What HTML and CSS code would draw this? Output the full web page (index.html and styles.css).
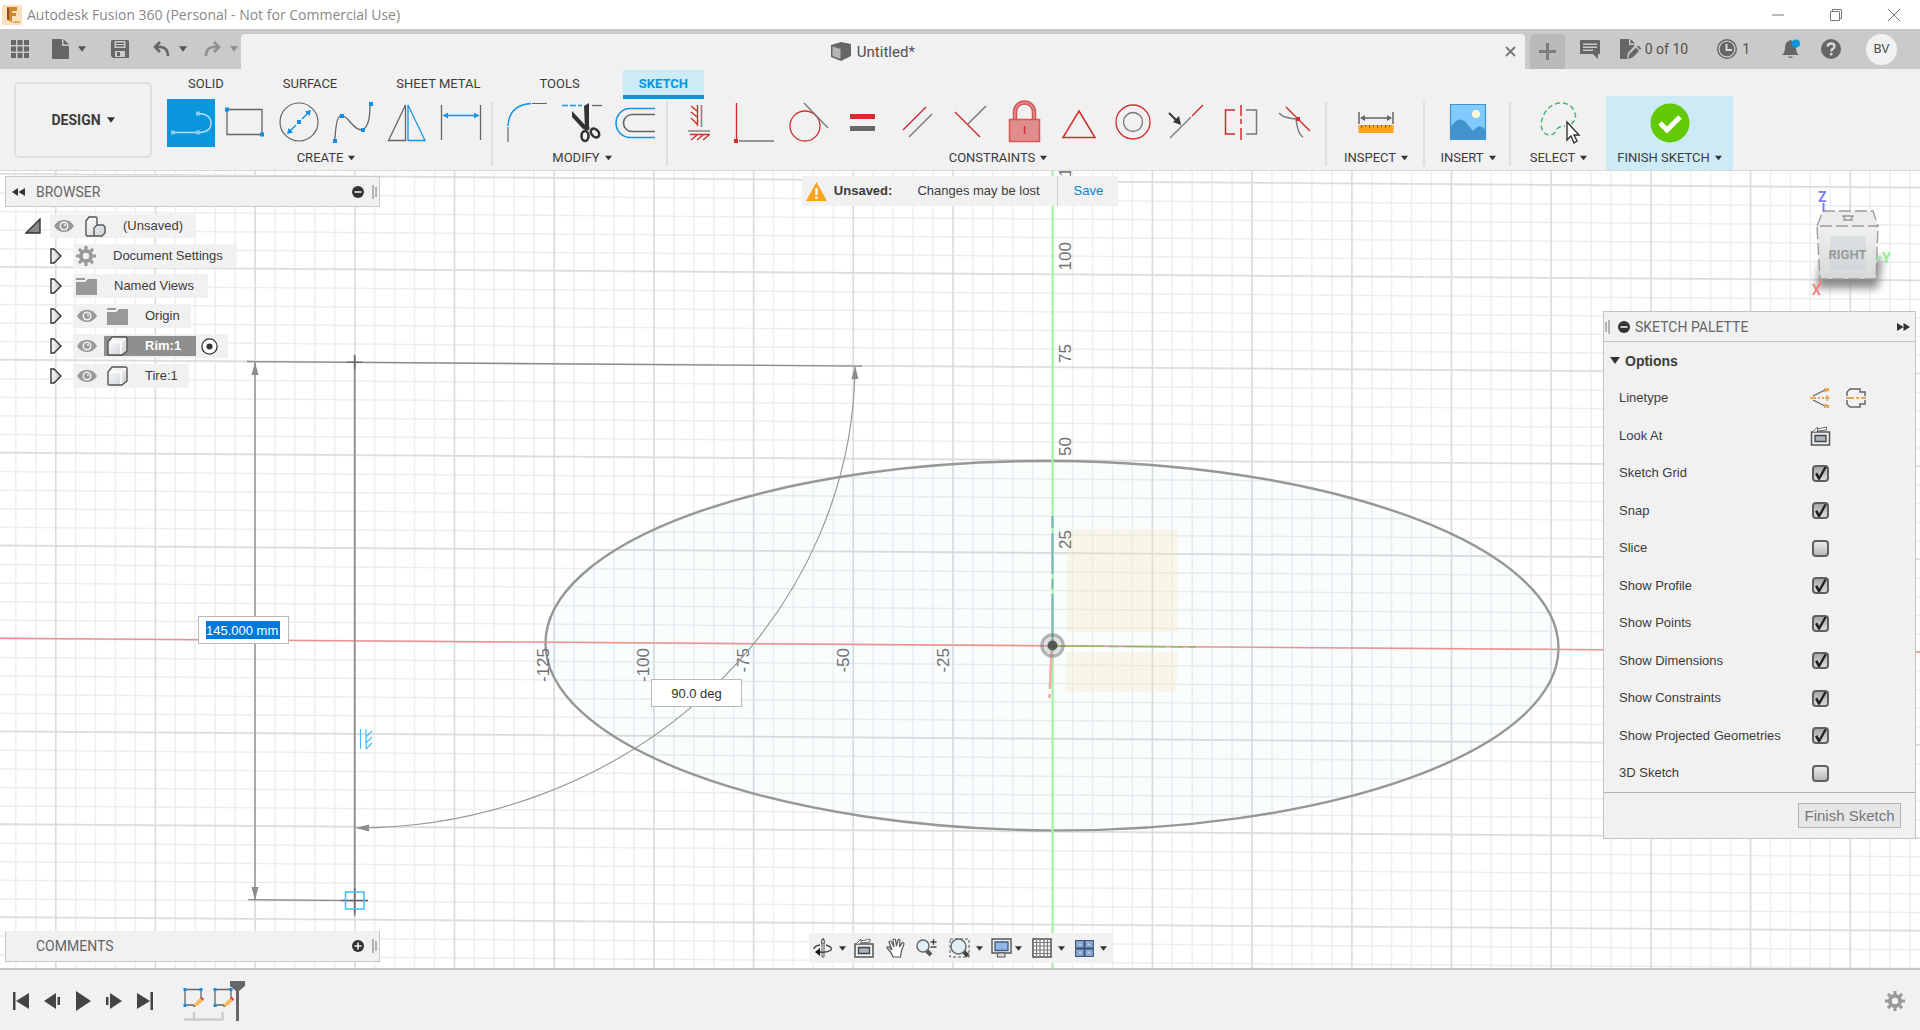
FILE: index.html
```html
<!DOCTYPE html>
<html lang="en">
<head>
<meta charset="utf-8">
<title>Autodesk Fusion 360</title>
<link rel="stylesheet" href="styles.css">
</head>
<body>
<svg class="defs" aria-hidden="true">
  <defs>
    <linearGradient id="face" x1="0" y1="0" x2="1" y2="1"><stop offset="0" stop-color="#fff"/><stop offset="1" stop-color="#ccd0d4"/></linearGradient>
    <linearGradient id="tri" x1="0" y1="0" x2="1" y2="0"><stop offset="0" stop-color="#fff"/><stop offset="1" stop-color="#bbb"/></linearGradient>
    <symbol id="caret" viewBox="0 0 9 6"><path d="M0 0H9L4.500 6Z" fill="currentColor"/></symbol>
    <symbol id="eye" viewBox="0 0 20 14"><path d="M0 7C5-1.500 15-1.500 20 7C15 15 5 15 0 7Z" fill="#999"/><circle cx="10" cy="7" r="4.500" fill="#f1f1f1"/><circle cx="10" cy="7" r="3" fill="#999"/><circle cx="11" cy="6" r="1" fill="#f1f1f1"/></symbol>
    <symbol id="folder" viewBox="0 0 21 17"><path d="M0 0H9V2H0ZM0 4H9L12 1H21V17H0Z" fill="#999"/></symbol>
    <symbol id="expand" viewBox="0 0 12 16"><path d="M1 1L4 1L11 8L4 15L1 15Z" fill="url(#tri)" stroke="#333" stroke-width="1.400"/></symbol>
    <symbol id="body" viewBox="0 0 21 20"><path d="M1 6L5 1H18L20 3V15L15 19H1Z" fill="url(#face)"/><path d="M1 6H14L19 1.500M14 6V18" fill="none" stroke="#fff" stroke-width="1.500"/><path d="M1 6L5 1H18Q20 1 20 3V15L15 19H2Q1 19 1 18Z" fill="none" stroke="#555" stroke-width="1.400"/></symbol>
    <symbol id="lookat" viewBox="0 0 20 20"><path d="M1 6H19V19H1Z" fill="#eee" stroke="#555" stroke-width="1.500"/><path d="M4.500 9.500H15.500V15.500H4.500Z" fill="#aab2c0" stroke="#444" stroke-width="1.300"/><path d="M2 6L7 1V3L16 1V4L7 5M7 3V6" fill="#fff" stroke="#666" stroke-width="1"/></symbol>
    <symbol id="gear" viewBox="0 0 20 20"><g fill="currentColor"><path d="M8.500 0H11.500V20H8.500Z"/><path d="M8.500 0H11.500V20H8.500Z" transform="rotate(45 10 10)"/><path d="M8.500 0H11.500V20H8.500Z" transform="rotate(90 10 10)"/><path d="M8.500 0H11.500V20H8.500Z" transform="rotate(135 10 10)"/><circle cx="10" cy="10" r="7"/></g><circle cx="10" cy="10" r="3.200" fill="#f1f1f1"/></symbol>
    <symbol id="feature" viewBox="0 0 21 22"><path d="M2 2.500H18M2 2V18M18 2V11M2 18H11" fill="none" stroke="#666" stroke-width="1.300"/><path d="M0.500 1H3.500V4H0.500ZM16.500 1H19.500V4H16.500ZM0.500 17H3.500V20H0.500Z" fill="#0d8fe6"/><path d="M10 20L12 16L17 11L20 14L15 18.500Z" fill="#f7bc55"/><path d="M17 11L19 10L21 12L20 14Z" fill="#d9394b"/><path d="M10 20L11 18L13 19.500Z" fill="#666"/></symbol>
  </defs>
</svg>

<div class="app">
  <header class="titlebar">
    <svg class="logo" width="20" height="20" viewBox="0 0 20 20"><rect width="20" height="20" rx="1" fill="#fae0bd"/><path d="M5 2H15V6H10V8H14V11H10V17L5 15Z" fill="#cf8430"/><path d="M5 2L7 4V15L5 14Z" fill="#8d5218"/><path d="M12 16H18V18H10Z" fill="#e8ae68"/></svg>
    <span class="titlebar-text">Autodesk Fusion 360 (Personal - Not for Commercial Use)</span>
    <div class="window-buttons">
      <button aria-label="Minimize"><svg width="12" height="12" viewBox="0 0 12 12"><path d="M0 6H12" stroke="#777"/></svg></button>
      <button aria-label="Restore"><svg width="12" height="12" viewBox="0 0 12 12"><path d="M0.500 2.500H9.500V11.500H0.500ZM2.500 2.500V0.500H11.500V9.500H9.500" fill="none" stroke="#777"/></svg></button>
      <button aria-label="Close"><svg width="12" height="12" viewBox="0 0 12 12"><path d="M0 0L12 12M12 0L0 12" stroke="#777"/></svg></button>
    </div>
  </header>

  <div class="tabbar">
    <div class="quick">
      <button aria-label="Data panel"><svg width="18" height="18" viewBox="0 0 18 18"><path d="M0 0H5V5H0ZM6.500 0H11.500V5H6.500ZM13 0H18V5H13ZM0 6.500H5V11.500H0ZM6.500 6.500H11.500V11.500H6.500ZM13 6.500H18V11.500H13ZM0 13H5V18H0ZM6.500 13H11.500V18H6.500ZM13 13H18V18H13Z" fill="#666"/></svg></button>
      <button class="q-file" aria-label="File"><svg width="17" height="20" viewBox="0 0 17 20"><path d="M1 0H10V7H17V19Q17 20 16 20H1Q0 20 0 19V1Q0 0 1 0ZM11.500 0L17 5.500H11.500Z" fill="#666"/></svg><svg class="c" width="8" height="6"><use href="#caret"/></svg></button>
      <button class="q-save" aria-label="Save"><svg width="18" height="18" viewBox="0 0 18 18"><path fill-rule="evenodd" d="M1 0H17L18 1V18H2L0 16V1ZM3.500 1V8H14.500V1ZM4 11V17H14V11ZM6 12H9V16H6ZM5 2.500H13V4H5ZM5 5H13V6.500H5Z" fill="#666"/></svg></button>
      <button class="q-undo" aria-label="Undo"><svg width="17" height="16" viewBox="0 0 17 16"><path d="M7 1L2 6L7 11M2 6H8Q15 7 15 15" fill="none" stroke="#666" stroke-width="2.600"/></svg><svg class="c" width="8" height="6"><use href="#caret"/></svg></button>
      <button class="q-redo" aria-label="Redo"><svg width="17" height="16" viewBox="0 0 17 16"><path d="M10 1L15 6L10 11M15 6H9Q2 7 2 15" fill="none" stroke="#8e8e8e" stroke-width="2.600"/></svg><svg class="c" width="8" height="6"><use href="#caret"/></svg></button>
    </div>
    <div class="doc-tab">
      <div class="doc-name"><svg width="21" height="20" viewBox="0 0 21 20"><path d="M0 3L10 0L20 2V14L10 19L0 15Z" fill="#666"/><path d="M1.500 4.500L9.500 7V17L1.500 14Z" fill="#b5b5b5"/></svg><span>Untitled*</span></div>
      <button class="tab-close" aria-label="Close tab"><svg width="11" height="11" viewBox="0 0 11 11"><path d="M1 1L10 10M10 1L1 10" stroke="#777" stroke-width="1.800"/></svg></button>
    </div>
    <button class="new-tab" aria-label="New tab"><svg width="17" height="17" viewBox="0 0 17 17"><path d="M8.500 0V17M0 8.500H17" stroke="#7c7c7c" stroke-width="3"/></svg></button>
    <div class="account">
      <button aria-label="Comments"><svg width="20" height="19" viewBox="0 0 20 19"><path fill-rule="evenodd" d="M0 1Q0 0 1 0H19Q20 0 20 1V14H18V19L13 14H0ZM3 3.500V5H17V3.500ZM3 6.500V8H17V6.500ZM3 9.500V11H13V9.500Z" fill="#666"/></svg></button>
      <button class="a-docs"><svg width="21" height="20" viewBox="0 0 21 20"><path d="M0 0H9V6H15L8 14L7 20H0ZM10.500 0L15 4.500H10.500Z" fill="#666"/><path d="M8 20L9.500 15L16 8.500L19 12L12.500 18.500ZM17 7.500L18.500 6.500L21 9.500L20 11Z" fill="#666"/></svg><span>0 of 10</span></button>
      <button class="a-jobs"><svg width="20" height="20" viewBox="0 0 20 20"><circle cx="10" cy="10" r="9.300" fill="#ccc" stroke="#666" stroke-width="1.400"/><circle cx="10" cy="10" r="7.300" fill="#666"/><path d="M9.500 5V11H15" fill="none" stroke="#d8d8d8" stroke-width="2"/></svg><span>1</span></button>
      <button class="a-bell" aria-label="Notifications"><svg width="19" height="20" viewBox="0 0 19 20"><path d="M0 16Q3 14 3 9Q3 3 7 2Q8.500 0 10 2Q14 3 14 9Q14 14 17 16ZM6 17.500H11Q8.500 20.500 6 17.500Z" fill="#666"/><circle cx="14" cy="4.500" r="4" fill="#0a96dc"/></svg></button>
      <button class="a-help" aria-label="Help"><svg width="20" height="20" viewBox="0 0 20 20"><circle cx="10" cy="10" r="10" fill="#666"/><path d="M6.500 7.500Q7 4.500 10 4.500Q13.500 4.500 13.500 7.500Q13.500 9 11.500 10Q10.200 11 10.200 12.500" fill="none" stroke="#dcdcdc" stroke-width="2.300"/><path d="M9 14H11.400V16.400H9Z" fill="#dcdcdc"/></svg></button>
      <button class="avatar">BV</button>
    </div>
  </div>

  <div class="ribbon">
    <button class="workspace">DESIGN <svg class="c" width="8" height="6"><use href="#caret"/></svg></button>
    <div class="ribbon-main">
      <nav class="ribbon-tabs">
        <button>SOLID</button><button>SURFACE</button><button>SHEET METAL</button><button>TOOLS</button><button class="active">SKETCH</button>
      </nav>
      <div class="groups">
        <div class="group g-create">
          <div class="tools">
            <button class="tool selected" aria-label="Line"><svg width="48" height="48" viewBox="0 0 48 48"><path d="M6 33.500H31M31 14.500Q44 15 44 24Q44 33 33 33.500" fill="none" stroke="#b5def3" stroke-width="1.400"/><path d="M4 31.500H8V35.500H4ZM29 31.500H33V35.500H29ZM29 12.500H33V16.500H29Z" fill="#8accee"/></svg></button>
            <button class="tool" aria-label="Rectangle"><svg width="48" height="48" viewBox="0 0 48 48"><path d="M6 10.500H41V35.500H6Z" fill="none" stroke="#666" stroke-width="1.300"/><path d="M4 8.500H8V12.500H4ZM39 33.500H43V37.500H39Z" fill="#0d8fe6"/></svg></button>
            <button class="tool" aria-label="Circle"><svg width="48" height="48" viewBox="0 0 48 48"><circle cx="24" cy="23" r="19" fill="none" stroke="#666" stroke-width="1.200"/><path d="M27 20L34 13M21 26L14 33" stroke="#1a95e8" stroke-width="1.500"/><path d="M22 21H26V25H22ZM36 11L34.500 17L30 12.500ZM12 35L13.500 29L18 33.500Z" fill="#0d8fe6"/></svg></button>
            <button class="tool" aria-label="Spline"><svg width="48" height="48" viewBox="0 0 48 48"><path d="M6 40Q7 19 11 17Q15 15 22 24Q28 31 33 31Q41 28 41 7" fill="none" stroke="#666" stroke-width="1.300"/><path d="M4 40H8V44H4ZM11 15H15V19H11ZM32 29H36V33H32ZM40 3H44V7H40Z" fill="#0d8fe6"/></svg></button>
            <button class="tool" aria-label="Mirror"><svg width="48" height="48" viewBox="0 0 48 48"><path d="M22.500 6V41.500H5.500Z" fill="none" stroke="#666" stroke-width="1.300"/><path d="M25 6V41.500H42Z" fill="none" stroke="#1a95e8" stroke-width="1.300"/></svg></button>
            <button class="tool" aria-label="Sketch dimension"><svg width="48" height="48" viewBox="0 0 48 48"><path d="M4.500 6V41M43.500 6V41" stroke="#666" stroke-width="1.300"/><path d="M6 16.500H42" stroke="#1a95e8" stroke-width="1.300"/><path d="M6 16.500L11 13.500V19.500ZM42 16.500L37 13.500V19.500Z" fill="#1a95e8"/></svg></button>
          </div>
          <button class="group-label">CREATE <svg class="c" width="7" height="6"><use href="#caret"/></svg></button>
        </div>
        <div class="group g-modify">
          <div class="tools">
            <button class="tool" aria-label="Fillet"><svg width="48" height="48" viewBox="0 0 48 48"><path d="M4 28V43M28 4.500H43" stroke="#666" stroke-width="1.200"/><path d="M4 27Q5 6 27 4.500" fill="none" stroke="#1a95e8" stroke-width="1.500"/></svg></button>
            <button class="tool" aria-label="Trim"><svg width="48" height="48" viewBox="0 0 48 48"><path d="M4 6.500H24" stroke="#1a95e8" stroke-width="1.500" stroke-dasharray="6 2"/><path d="M34 6.500H44" stroke="#666" stroke-width="1.300"/><path d="M14 12L29 28V31L25 30L14 18ZM26 7L31 4V27L27 30Z" fill="#333"/><ellipse cx="27" cy="37" rx="3.500" ry="5" fill="none" stroke="#333" stroke-width="2.600"/><ellipse cx="37" cy="34" rx="3.500" ry="5" transform="rotate(-40 37 34)" fill="none" stroke="#333" stroke-width="2.600"/><circle cx="29" cy="29" r="2.500" fill="#333"/></svg></button>
            <button class="tool" aria-label="Offset"><svg width="48" height="48" viewBox="0 0 48 48"><path d="M43 9.500H18A14 14.500 0 0 0 18 38.500H43" fill="none" stroke="#1a95e8" stroke-width="1.600"/><path d="M43 15.500H20A8.500 8.500 0 0 0 20 32.500H43" fill="none" stroke="#666" stroke-width="1.600"/></svg></button>
          </div>
          <button class="group-label">MODIFY <svg class="c" width="7" height="6"><use href="#caret"/></svg></button>
        </div>
        <div class="group g-constraints">
          <div class="tools">
            <button class="tool" aria-label="Horizontal/Vertical"><svg width="48" height="48" viewBox="0 0 48 48"><path d="M20.500 6V27M20 12L14 7M20 18L14 13M20 25L14 19M13 35.500H33M20 36L14 41M26 36L20 41M32 36L26 41" stroke="#d12d2d" stroke-width="1.400"/><path d="M24.500 6V28M11 32H33" stroke="#888" stroke-width="1.600"/></svg></button>
            <button class="tool" aria-label="Coincident"><svg width="48" height="48" viewBox="0 0 48 48"><path d="M5.500 4V40" stroke="#d12d2d" stroke-width="1.400"/><path d="M3 40H7V44H3Z" fill="#d12d2d"/><path d="M8 42H43" stroke="#777" stroke-width="1.300"/></svg></button>
            <button class="tool" aria-label="Tangent"><svg width="48" height="48" viewBox="0 0 48 48"><circle cx="20" cy="27" r="15" fill="none" stroke="#d12d2d" stroke-width="1.300"/><path d="M19 4L43 29" stroke="#777" stroke-width="1.300"/></svg></button>
            <button class="tool" aria-label="Equal"><svg width="48" height="48" viewBox="0 0 48 48"><path d="M11 15H36V20H11Z" fill="#d12d2d"/><path d="M11 27H36V32H11Z" fill="#666"/></svg></button>
            <button class="tool" aria-label="Parallel"><svg width="48" height="48" viewBox="0 0 48 48"><path d="M10 31L33 8" stroke="#d12d2d" stroke-width="1.400"/><path d="M16 38L39 15" stroke="#777" stroke-width="1.400"/></svg></button>
            <button class="tool" aria-label="Perpendicular"><svg width="48" height="48" viewBox="0 0 48 48"><path d="M8 13L33 38" stroke="#d12d2d" stroke-width="1.400"/><path d="M21 25L39 7" stroke="#777" stroke-width="1.400"/></svg></button>
            <button class="tool" aria-label="Fix"><svg width="48" height="48" viewBox="0 0 48 48"><path d="M14 20V13A9 9 0 0 1 33 13V20" fill="none" stroke="#d85555" stroke-width="4.500"/><path d="M14 20V13A9 9 0 0 1 33 13V20" fill="none" stroke="#e08f8f" stroke-width="1.500"/><path d="M8.500 20.500H38.500V42.500H8.500Z" fill="#df8d8d" stroke="#d85555" stroke-width="1.500"/><path d="M23.500 27V35" stroke="#d12d2d" stroke-width="1.500"/></svg></button>
            <button class="tool" aria-label="Midpoint"><svg width="48" height="48" viewBox="0 0 48 48"><path d="M24 12L40 38.500H8Z" fill="none" stroke="#d12d2d" stroke-width="1.500"/></svg></button>
            <button class="tool" aria-label="Concentric"><svg width="48" height="48" viewBox="0 0 48 48"><circle cx="24" cy="23" r="17" fill="none" stroke="#d12d2d" stroke-width="1.300"/><circle cx="24" cy="23" r="9.500" fill="none" stroke="#777" stroke-width="1.300"/></svg></button>
            <button class="tool" aria-label="Collinear"><svg width="48" height="48" viewBox="0 0 48 48"><path d="M7 39L28 18" stroke="#777" stroke-width="1.300"/><path d="M29 17L40 6" stroke="#d12d2d" stroke-width="1.400"/><path d="M6 14L13 21" stroke="#333" stroke-width="2"/><path d="M18 26L10 23L16 17Z" fill="#333"/></svg></button>
            <button class="tool" aria-label="Symmetry"><svg width="48" height="48" viewBox="0 0 48 48"><path d="M18 11H8.500V35H18M24 6V17M24 20V25M24 29V41" fill="none" stroke="#d12d2d" stroke-width="1.500"/><path d="M29 11H39.500V35H29" fill="none" stroke="#777" stroke-width="1.500"/></svg></button>
            <button class="tool" aria-label="Curvature"><svg width="48" height="48" viewBox="0 0 48 48"><path d="M8 14Q12 19 25 20Q27 36 32 38" fill="none" stroke="#777" stroke-width="1.400"/><path d="M15 8L39 32" stroke="#d12d2d" stroke-width="1.400"/><path d="M25 18H29V22H25Z" fill="#d12d2d"/></svg></button>
          </div>
          <button class="group-label">CONSTRAINTS <svg class="c" width="7" height="6"><use href="#caret"/></svg></button>
        </div>
        <div class="group g-inspect">
          <div class="tools"><button class="tool" aria-label="Measure"><svg width="48" height="48" viewBox="0 0 48 48"><path d="M7 13V25M41 13V25M9 19H39" stroke="#666" stroke-width="1.500"/><path d="M8 19L13 16V22ZM40 19L35 16V22Z" fill="#666"/><path d="M6.500 26H41.500V34H6.500Z" fill="#fba31a"/><path d="M9.500 26V29M13.500 26V28M17.500 26V29M21.500 26V28M25.500 26V29M29.500 26V28M33.500 26V29M37.500 26V28" stroke="#7b6242"/></svg></button></div>
          <button class="group-label">INSPECT <svg class="c" width="7" height="6"><use href="#caret"/></svg></button>
        </div>
        <div class="group g-insert">
          <div class="tools"><button class="tool" aria-label="Insert image"><svg width="48" height="48" viewBox="0 0 48 48"><path d="M6.500 5.500H41.500V40.500H6.500Z" fill="#80caff"/><path d="M6.500 28Q16 14 24 26L29 32L31 30Q35 24 41.500 31V40.500H6.500Z" fill="#4294cf"/><circle cx="32" cy="15" r="4" fill="#fff7cf"/><path d="M6.500 5.500H41.500V40.500H6.500Z" fill="none" stroke="#4294cf" stroke-width="1.200"/></svg></button></div>
          <button class="group-label">INSERT <svg class="c" width="7" height="6"><use href="#caret"/></svg></button>
        </div>
        <div class="group g-select">
          <div class="tools"><button class="tool" aria-label="Select"><svg width="48" height="48" viewBox="0 0 48 48"><path d="M36 25Q42 21 40 14Q36 3 24 4Q9 7 6 25Q7 37 16 36Q20 35 22 30Q24 27 30 27" fill="none" stroke="#44b973" stroke-width="1.500" stroke-dasharray="5 3"/><path d="M32 23V41L36 37L39 44L42 42L39 36H44Z" fill="#fff" stroke="#333" stroke-width="1.400"/></svg></button></div>
          <button class="group-label">SELECT <svg class="c" width="7" height="6"><use href="#caret"/></svg></button>
        </div>
        <div class="group g-finish">
          <div class="tools"><button class="tool" aria-label="Finish sketch"><svg width="48" height="48" viewBox="0 0 48 48"><circle cx="24" cy="24" r="19.500" fill="#62c905"/><path d="M14 24L21 31L34 18" fill="none" stroke="#fff" stroke-width="5"/></svg></button></div>
          <button class="group-label">FINISH SKETCH <svg class="c" width="7" height="6"><use href="#caret"/></svg></button>
        </div>
      </div>
    </div>
  </div>

  <main class="canvas">
    <svg class="drawing" viewBox="0 171 1920 797" preserveAspectRatio="xMinYMin slice">
      <!-- grid: wide dashed strokes give evenly spaced lines -->
      <path d="M15 570H1930" stroke="#edf0f0" stroke-width="900" stroke-dasharray="1.500 18.440"/>
      <g transform="skewY(0.407)"><path d="M960 155V1000" stroke="#eceeee" stroke-width="2000" stroke-dasharray="1.500 17.080"/></g>
      <path d="M55 570H1930" stroke="#dadddd" stroke-width="900" stroke-dasharray="1.500 98.200"/>
      <g transform="skewY(0.407)"><path d="M960 173V1000" stroke="#dbdddd" stroke-width="2000" stroke-dasharray="1.500 91.400"/></g>
      <ellipse cx="1052" cy="645.700" rx="506.500" ry="184.700" transform="rotate(0.300 1052 645.700)" fill="#0096c8" fill-opacity="0.025" stroke="#979797" stroke-width="2.400"/>
      <path d="M1067 529H1178V632H1067ZM1067 652H1178L1176 692H1065Z" fill="#f5e7b8" fill-opacity="0.300"/>
      <path d="M0 638.300L1920 652" stroke="#f28e8e" stroke-width="1.400"/>
      <path d="M1052.500 171V968" stroke="#a5f5a5" stroke-width="2.200"/>
      <path d="M1052.500 516V645" stroke="#82b8b8" stroke-width="2.200" stroke-dasharray="12 5 41 5 10 5 50"/>
      <path d="M1052 646L1196 647" stroke="#9bb860" stroke-width="1.500" stroke-dasharray="52 5 10 5 42 5 12 5"/>
      <path d="M1051.500 650L1049.500 698" stroke="#f5aaa5" stroke-width="2.500" stroke-dasharray="39 5 4"/>
      <circle cx="1052.500" cy="645.500" r="10.500" fill="none" stroke="#777" stroke-opacity="0.550" stroke-width="3.500"/><circle cx="1052.500" cy="645.500" r="8" fill="#999" fill-opacity="0.300"/><circle cx="1052.500" cy="645.500" r="5" fill="#444" fill-opacity="0.850"/>
      <g class="axis-labels">
        <g text-anchor="end">
          <text transform="translate(549 648) rotate(-90)">-125</text>
          <text transform="translate(649 648) rotate(-90)">-100</text>
          <text transform="translate(749 648) rotate(-90)">-75</text>
          <text transform="translate(849 648) rotate(-90)">-50</text>
          <text transform="translate(949 648) rotate(-90)">-25</text>
          <text transform="translate(1071 242) rotate(-90)">100</text>
          <text transform="translate(1071 344) rotate(-90)">75</text>
          <text transform="translate(1071 437) rotate(-90)">50</text>
          <text transform="translate(1071 530) rotate(-90)">25</text>
        </g>
        <text transform="translate(1071 177) rotate(-90)">125</text>
      </g>
      <path d="M354.700 355V916" stroke="#8c8c8c" stroke-width="1.800"/>
      <path d="M247 361.500L862 366.200M255 362V899.500M248 899.700L368 900.600" stroke="#8c8c8c" stroke-width="1.300"/>
      <path d="M855 367A500 465 0 0 1 356 828" fill="none" stroke="#999" stroke-width="1.200"/>
      <path d="M255 362L251.500 375H258.500ZM255 900L251.500 887H258.500ZM855 366L851.500 379H858.500ZM356 828L369 824.500V831.500Z" fill="#8c8c8c"/>
      <path d="M347 362.200H362M354.700 355V369M341 900.500H368M354.700 888V913" stroke="#666" stroke-width="1.300"/>
      <path d="M345.500 892H364V909H345.500Z" fill="none" stroke="#42bdf5" stroke-width="1.500"/>
      <path d="M360.500 729V749M366 729V749M372 731L366 737M372 737L366 743M372 743L366 749" fill="none" stroke="#42bdf5" stroke-width="1.200"/>
    </svg>

    <div class="dim dim-length"><input class="selected-text" aria-label="Length" value="145.000 mm"></div>
    <div class="dim dim-angle"><input aria-label="Angle" value="90.0 deg"></div>

    <svg class="viewcube" width="90" height="125" viewBox="1808 182 90 125">
      <defs><linearGradient id="cube" x1="0" y1="0" x2="0" y2="1"><stop offset="0" stop-color="#f0f0f0"/><stop offset="1" stop-color="#d6d8d8"/></linearGradient><filter id="soft" x="-20%" y="-20%" width="140%" height="150%"><feGaussianBlur stdDeviation="4"/></filter></defs>
      <path d="M1822 260L1882 258L1878 288H1816Z" fill="#888" filter="url(#soft)"/>
      <path d="M1823 211H1873L1878 226H1817Z" fill="#ececec"/><path d="M1817 226H1878L1876 279H1820Z" fill="url(#cube)"/>
      <path d="M1830 236H1866V270H1830Z" fill="#ccd3d8" opacity="0.500"/>
      <path d="M1817 226L1823 211H1873L1878 226H1817L1820 279H1876L1878 226" fill="none" stroke="#999" stroke-width="1.300" stroke-dasharray="12 4"/>
      <path d="M1842 216H1854M1843 220H1853M1844 216L1845 220M1852 216L1851 220" stroke="#999" stroke-width="1.500"/>
      <path d="M1823.500 203V212" stroke="#7d7df5" stroke-width="2"/><path d="M1820 280V286" stroke="#f58080" stroke-width="2"/><path d="M1877 257.500H1881" stroke="#90ee90" stroke-width="2"/>
      <text class="cube-face" x="1847.500" y="259" text-anchor="middle">RIGHT</text>
      <text class="cube-axis" x="1818" y="202" fill="#7d7df5">Z</text><text class="cube-axis" x="1882" y="263" fill="#90ee90">Y</text><text class="cube-axis" x="1812" y="295" fill="#f58080">X</text>
    </svg>

    <aside class="side">
      <div>
        <div class="panel-head browser-head">
          <svg width="13" height="8" viewBox="0 0 13 8"><path d="M6 0V8L0 4ZM13 0V8L6.500 4Z" fill="#333"/></svg><span>BROWSER</span>
          <svg class="dot" width="12" height="12" viewBox="0 0 12 12"><circle cx="6" cy="6" r="6" fill="#333"/><path d="M2.500 6H9.500" stroke="#eee" stroke-width="1.600"/></svg>
          <svg width="5" height="14" viewBox="0 0 5 14"><path d="M1 0V14M4 2V12" stroke="#777"/></svg>
        </div>
        <ul class="tree">
          <li class="lvl0"><svg width="16" height="16" viewBox="0 0 16 16"><path d="M1 15H15V1Z" fill="#888" stroke="#333" stroke-width="1.400"/></svg><div class="chip root"><svg width="20" height="14"><use href="#eye"/></svg><svg width="21" height="21" viewBox="0 0 21 21"><path d="M1 5L4 1H11L13 3V9H18L20 11V17L17 20H1Z" fill="url(#face)"/><path d="M1 5L4 1H11L12 2V9H18L20 11V17L17 20H2L1 19ZM9 20V12L12 9" fill="none" stroke="#555" stroke-width="1.400"/></svg><span>(Unsaved)</span></div></li>
          <li><svg width="12" height="16"><use href="#expand"/></svg><div class="chip doc"><svg class="gear" width="20" height="20"><use href="#gear"/></svg><span>Document Settings</span></div></li>
          <li><svg width="12" height="16"><use href="#expand"/></svg><div class="chip doc"><svg width="21" height="17"><use href="#folder"/></svg><span>Named Views</span></div></li>
          <li><svg width="12" height="16"><use href="#expand"/></svg><div class="chip"><svg width="20" height="14"><use href="#eye"/></svg><div class="item"><svg width="21" height="17"><use href="#folder"/></svg><span>Origin</span></div></div></li>
          <li><svg width="12" height="16"><use href="#expand"/></svg><div class="chip"><svg width="20" height="14"><use href="#eye"/></svg><div class="item picked"><svg width="21" height="20"><use href="#body"/></svg><span>Rim:1</span></div><svg class="active-dot" width="17" height="17" viewBox="0 0 17 17"><circle cx="8.500" cy="8.500" r="7.600" fill="#fff" stroke="#333" stroke-width="1.300"/><circle cx="8.500" cy="8.500" r="3" fill="#333"/></svg></div></li>
          <li><svg width="12" height="16"><use href="#expand"/></svg><div class="chip"><svg width="20" height="14"><use href="#eye"/></svg><div class="item"><svg width="21" height="20"><use href="#body"/></svg><span>Tire:1</span></div></div></li>
        </ul>
      </div>
      <div class="panel-head comments-head">
        <span>COMMENTS</span>
        <svg class="dot" width="12" height="12" viewBox="0 0 12 12"><circle cx="6" cy="6" r="6" fill="#333"/><path d="M2.500 6H9.500M6 2.500V9.500" stroke="#eee" stroke-width="1.600"/></svg>
        <svg width="5" height="14" viewBox="0 0 5 14"><path d="M1 0V14M4 2V12" stroke="#777"/></svg>
      </div>
    </aside>

    <div class="middle">
      <div class="notice">
        <svg width="21" height="19" viewBox="0 0 21 19"><path d="M10.500 0L21 19H0Z" fill="#fba31a"/><path d="M10.500 6V13M10.500 14.500V17" stroke="#fff" stroke-width="2.400"/></svg>
        <strong>Unsaved:</strong><span>Changes may be lost</span><a href="#save">Save</a>
      </div>
      <div class="navbar">
        <button class="n-orbit" aria-label="Orbit"><svg width="20" height="20" viewBox="0 0 20 20"><path d="M9 1H11V19H9Z" fill="#fff" stroke="#555"/><path d="M8 5L10 0.500L12 5Z" fill="#fff" stroke="#555"/><path d="M7 7Q1 8 1 11M13 7Q20 9 18 12Q14 15 7 14" fill="none" stroke="#444" stroke-width="1.400"/><path d="M2 14L7 10V18Z" fill="#111"/></svg><svg class="c" width="7" height="5"><use href="#caret"/></svg></button>
        <button class="n-look" aria-label="Look at"><svg width="20" height="20"><use href="#lookat"/></svg></button>
        <button class="n-pan" aria-label="Pan"><svg width="20" height="20" viewBox="0 0 20 20"><path d="M7 19Q6 15 1 10Q1 8 3 9L6 12L3 4Q4 2 5.500 4L8 9L7 2Q8.500 0 9.500 2L10.500 8L12 2Q14 0.500 14 3L13.500 9L16 5Q18 4 18 6L15.500 13Q15 16 14.500 19Z" fill="#fff" stroke="#555" stroke-width="1.200"/></svg></button>
        <button class="n-zoom" aria-label="Zoom"><svg width="21" height="20" viewBox="0 0 21 20"><path d="M10 12L15 17" stroke="#555" stroke-width="4"/><circle cx="7" cy="8" r="6" fill="#e3eff7" stroke="#666" stroke-width="1.400"/><path d="M14.500 4H20.500M17.500 1V7M14.500 9H20.500" stroke="#444" stroke-width="1.300"/></svg></button>
        <button class="n-fit" aria-label="Fit"><svg width="21" height="20" viewBox="0 0 21 20"><path d="M1 1H20V19H1Z" fill="none" stroke="#555" stroke-dasharray="3 2"/><path d="M14 13L19 18" stroke="#444" stroke-width="4"/><circle cx="9.500" cy="8.500" r="7.500" fill="#e3eff7" stroke="#666" stroke-width="1.400"/></svg><svg class="c" width="7" height="5"><use href="#caret"/></svg></button>
        <button class="n-disp" aria-label="Display settings"><svg width="21" height="20" viewBox="0 0 21 20"><path d="M1 1H20V15H1Z" fill="#eee" stroke="#555" stroke-width="1.400"/><path d="M4 4H17V12.500H4Z" fill="#8fb8e6" stroke="#3d5f8c" stroke-width="1.300"/><path d="M7 15H14V19H6Z" fill="#ddd" stroke="#555"/></svg><svg class="c" width="7" height="5"><use href="#caret"/></svg></button>
        <button class="n-grid" aria-label="Grid and snaps"><svg width="20" height="20" viewBox="0 0 20 20"><path d="M1 1H19V19H1Z" fill="#fff" stroke="#555" stroke-width="1.600"/><path d="M4.500 1V19M8 1V19M12 1V19M15.500 1V19M1 4.500H19M1 8H19M1 12H19M1 15.500H19" stroke="#777" stroke-width="1.200"/></svg><svg class="c" width="7" height="5"><use href="#caret"/></svg></button>
        <button class="n-view" aria-label="Viewports"><svg width="19" height="17" viewBox="0 0 19 17"><path d="M0.700 0.700H9V8H0.700ZM10 0.700H18.300V8H10ZM0.700 9H9V16.300H0.700ZM10 9H18.300V16.300H10Z" fill="#9dbde3" stroke="#3f5880" stroke-width="1.300"/><path d="M3 3H7V6H3ZM12 3H16V6H12ZM3 11H7V14H3ZM12 11H16V14H12Z" fill="#b9d2ee" stroke="#6a8bb5" stroke-width="0.800"/></svg><svg class="c" width="7" height="5"><use href="#caret"/></svg></button>
      </div>
    </div>

    <aside class="palette">
      <div class="palette-head"><svg width="5" height="14" viewBox="0 0 5 14"><path d="M1 2V12M4 0V14" stroke="#777"/></svg><svg class="pdot" width="12" height="12" viewBox="0 0 12 12"><circle cx="6" cy="6" r="6" fill="#333"/><path d="M2.500 6H9.500" stroke="#eee" stroke-width="1.600"/></svg><span>SKETCH PALETTE</span><svg class="ff" width="13" height="8" viewBox="0 0 13 8"><path d="M0 0L6.500 4L0 8ZM6.500 0L13 4L6.500 8Z" fill="#333"/></svg></div>
      <div class="options">
        <h2><svg width="10" height="7" viewBox="0 0 10 7"><path d="M0 0H10L5 7Z" fill="#333"/></svg>Options</h2>
        <div class="opt"><span>Linetype</span><div class="ctl"><button aria-label="Construction"><svg width="20" height="20" viewBox="0 0 20 20"><path d="M3 8L15 2M3 12L15 18" stroke="#666" stroke-width="1.300"/><path d="M0 10H14" stroke="#e0902f" stroke-width="1.500" stroke-dasharray="6 2 2 2"/><path d="M17 7V13M14 0L19 3M19 0L15 4M14 20L19 17M19 20L15 16M15 10H20" stroke="#e0902f" stroke-width="1.200"/></svg></button><button aria-label="Centerline"><svg width="20" height="20" viewBox="0 0 20 20"><path d="M1 8V4L4 1H14V4H19V8M1 12V16L4 19H14V16H19V12" fill="none" stroke="#666" stroke-width="1.500"/><path d="M0 10H20" stroke="#e0902f" stroke-width="1.500" stroke-dasharray="8 2 3 2"/></svg></button></div></div>
        <div class="opt"><span>Look At</span><div class="ctl"><button aria-label="Look At"><svg width="21" height="20"><use href="#lookat"/></svg></button></div></div>
        <div class="opt"><label for="o1">Sketch Grid</label><div class="ctl"><input type="checkbox" id="o1" checked></div></div>
        <div class="opt"><label for="o2">Snap</label><div class="ctl"><input type="checkbox" id="o2" checked></div></div>
        <div class="opt"><label for="o3">Slice</label><div class="ctl"><input type="checkbox" id="o3"></div></div>
        <div class="opt"><label for="o4">Show Profile</label><div class="ctl"><input type="checkbox" id="o4" checked></div></div>
        <div class="opt"><label for="o5">Show Points</label><div class="ctl"><input type="checkbox" id="o5" checked></div></div>
        <div class="opt"><label for="o6">Show Dimensions</label><div class="ctl"><input type="checkbox" id="o6" checked></div></div>
        <div class="opt"><label for="o7">Show Constraints</label><div class="ctl"><input type="checkbox" id="o7" checked></div></div>
        <div class="opt"><label for="o8">Show Projected Geometries</label><div class="ctl"><input type="checkbox" id="o8" checked></div></div>
        <div class="opt"><label for="o9">3D Sketch</label><div class="ctl"><input type="checkbox" id="o9"></div></div>
      </div>
      <div class="palette-foot"><button>Finish Sketch</button></div>
    </aside>
  </main>

  <footer class="timeline">
    <div class="playback">
      <button aria-label="Go to start"><svg width="16" height="18" viewBox="0 0 16 18"><path d="M0 0H2.500V18H0ZM16 1V17L3 9Z" fill="#444"/></svg></button>
      <button aria-label="Step back"><svg width="16" height="18" viewBox="0 0 16 18"><path d="M12 1V17L0 9ZM13.500 5H16V13H13.500Z" fill="#444"/></svg></button>
      <button aria-label="Play"><svg width="16" height="20" viewBox="0 0 16 20"><path d="M1 0L16 10L1 20Z" fill="#444"/></svg></button>
      <button aria-label="Step forward"><svg width="16" height="18" viewBox="0 0 16 18"><path d="M4 1V17L16 9ZM0 5H2.500V13H0Z" fill="#444"/></svg></button>
      <button aria-label="Go to end"><svg width="16" height="18" viewBox="0 0 16 18"><path d="M13.500 0H16V18H13.500ZM0 1V17L13 9Z" fill="#444"/></svg></button>
    </div>
    <svg class="features" width="66" height="42" viewBox="181 981 66 42"><use href="#feature" x="183" y="988" width="21" height="22"/><use href="#feature" x="213" y="988" width="21" height="22"/><path d="M184 1020.500H223.500M194 1013V1020M222.500 1013V1021" stroke="#ccc" stroke-width="2.500"/><path d="M230 982H245V987L239 992V1022H236V992L230 987Z" fill="#666"/></svg>
    <button class="settings" aria-label="Timeline settings"><svg width="20" height="20"><use href="#gear"/></svg></button>
  </footer>
</div>
</body>
</html>
```
FILE: styles.css
```css
* { box-sizing: border-box; }
body { margin: 0; font: 13px/16px "Liberation Sans", Arial, sans-serif; color: #3c3c3c; }
button { margin: 0; padding: 0; border: 0; background: none; font: inherit; color: inherit; display: flex; align-items: center; }
svg { flex: none; display: block; }
.defs { position: absolute; width: 0; height: 0; }
.c { color: #333; }
.app { display: flex; flex-direction: column; min-height: 100vh; background: #f1f1f1; }

.titlebar { display: flex; align-items: center; height: 29px; padding: 0 20px 0 2px; background: #fff; }
.titlebar-text { margin-left: 5px; font: 14px/20px "Open Sans", "Noto Sans", sans-serif; color: #888; }
.window-buttons { display: flex; gap: 46px; margin-left: auto; }

.tabbar { display: flex; height: 40px; padding-top: 5px; background: #cacaca; }
.quick { display: flex; align-items: center; width: 241px; padding: 0 8px 6px 11px; }
.quick .c { margin-left: 9px; color: #555; }
.q-file { margin-left: 23px; }
.q-save { margin-left: 25px; }
.q-undo { margin-left: 24px; }
.q-redo { margin-left: 17px; }
.q-redo .c { color: #8e8e8e; }
.doc-tab { flex: 1; display: flex; align-items: center; padding-right: 9px; background: #f1f1f1; border-radius: 4px 4px 0 0; }
.doc-name { flex: 1; display: flex; justify-content: center; align-items: center; gap: 5px; font: 15px/20px Roboto, sans-serif; color: #505050; }
.new-tab { justify-content: center; width: 35px; margin: 0 15px 0 5px; background: #b8bbba; border-radius: 4px 4px 0 0; }
.account { display: flex; align-items: center; height: 30px; padding-right: 23px; font: 14px/20px Roboto, sans-serif; color: #505050; }
.a-docs { margin-left: 20px; gap: 4px; }
.a-jobs { margin-left: 29px; gap: 5px; }
.a-bell { margin-left: 32px; }
.a-help { margin-left: 20px; }
.avatar { justify-content: center; width: 31px; height: 31px; margin-left: 25px; border-radius: 50%; background: #f1f1f1; font-size: 13px; }

.ribbon { display: flex; height: 102px; padding-left: 14px; border-bottom: 1px solid #d8d8d8; }
.workspace { justify-content: center; gap: 6px; width: 138px; height: 76px; margin: 13px 12px 0 0; border: 2px solid #dedede; border-radius: 5px; font: bold 14px/20px Roboto, sans-serif; }
.ribbon-main { flex: 1; }
.ribbon-tabs { display: flex; gap: 27px; height: 30px; padding: 1px 0 0 8px; font: 13px/16px Roboto, sans-serif; }
.ribbon-tabs button { padding: 0 16px 1px; height: 29px; }
.ribbon-tabs .active { padding-top: 3px; background: #cdeaf7; border-bottom: 4px solid #0a96dc; color: #0a96dc; font-weight: bold; }
.groups { display: flex; }
.group { position: relative; display: flex; flex-direction: column; align-items: center; height: 71px; }
.group:not(.g-select, .g-finish)::after { content: ""; position: absolute; right: 0; top: 3px; width: 2px; height: 64px; background: #dedede; }
.g-create { padding-right: 5px; }
.g-modify { padding: 0 5px 0 8px; }
.g-constraints { padding: 0 5px 0 6px; }
.g-inspect { width: 98px; }
.g-insert { width: 86px; }
.g-select { width: 95px; }
.g-finish { width: 127px; height: 74px; margin-top: -3px; padding-top: 3px; background: #cdeaf7; }
.tools { display: flex; }
.tool { justify-content: center; width: 48px; height: 48px; margin: 0 3px; }
.tool.selected { background: #0a96dc; }
.group-label { gap: 5px; height: 22px; font: 13px/20px Roboto, sans-serif; }

.canvas { position: relative; flex: 1; display: flex; justify-content: space-between; overflow: hidden; background: #fff; }
.drawing { position: absolute; left: 0; top: 0; width: 100%; height: 100%; }
.axis-labels { font: 17px "Liberation Sans", Arial, sans-serif; fill: #707070; }
.dim { position: absolute; width: 91px; height: 28px; padding: 4px 7px; border: 1px solid #b8b8b8; background: #fff; }
.dim input { display: block; width: 100%; height: 18px; padding: 0; border: 0; font: inherit; color: #333; text-align: center; }
.dim .selected-text { width: 74px; background: #0078d7; color: #fff; text-align: left; }
.dim-length { left: 198px; top: 445px; }
.dim-angle { left: 651px; top: 508px; }
.viewcube { position: absolute; right: 22px; top: 11px; }
.cube-face { font: bold 13px Roboto, sans-serif; fill: #999; }
.cube-axis { font: bold 14px Roboto, sans-serif; }

.side { position: relative; display: flex; flex-direction: column; justify-content: space-between; width: 375px; margin: 5px 0 6px 5px; }
.panel-head { display: flex; align-items: center; height: 31px; padding: 0 2px 0 30px; border: 1px solid #c8c8c8; background: #f1f1f1; font: 14px/20px Roboto, sans-serif; color: #666; }
.panel-head .dot { margin: 0 8px 0 auto; }
.browser-head { padding-left: 6px; gap: 0; }
.browser-head span { margin-left: 11px; }
.comments-head { border-top: 0; }
.tree { display: grid; grid-auto-rows: 24px; gap: 6px; margin: 7px 0 0; padding: 0 0 0 45px; list-style: none; }
.tree li { display: flex; align-items: center; gap: 11px; }
.tree .lvl0 { margin-left: -25px; gap: 9px; }
.chip { display: flex; align-items: center; height: 24px; padding: 0 0 0 4px; background: #f1f1f1; }
.root { padding-right: 13px; }
.root svg + svg { margin: 0 17px 0 11px; }
.doc { padding: 0 14px 0 3px; }
.doc span { margin-left: 17px; }
.gear, .settings { color: #999; }
.item { display: flex; align-items: center; height: 20px; margin-left: 7px; padding: 0 11px 0 3px; }
.item span { margin-left: 17px; }
.picked { padding-right: 15px; background: #8f8f8f; color: #fff; font-weight: bold; }
.active-dot { margin: 0 10px 0 5px; }

.middle { position: absolute; inset: 5px 0 5px; display: flex; flex-direction: column; justify-content: space-between; align-items: center; pointer-events: none; }
.middle > * { pointer-events: auto; }
.notice { display: flex; align-items: center; height: 30px; padding: 0 0 0 4px; background: #f1f1f1; }
.notice strong { margin: 0 25px 0 7px; }
.notice span { padding-right: 17px; line-height: 30px; border-right: 1px solid #ccc; }
.notice a { padding: 0 15px 0 16px; color: #0a82d0; text-decoration: none; }
.navbar { display: flex; align-items: center; height: 30px; padding: 0 5px 0 4px; background: #f1f1f1; }
.navbar .c { margin-left: 6px; }
.n-look, .n-zoom, .n-fit, .n-disp, .n-grid, .n-view { margin-left: 10px; }
.n-look { margin-left: 8px; }
.n-pan { margin-left: 12px; }
.n-fit { margin-left: 12px; }
.n-disp { margin-left: 8px; }
.navbar .n-disp .c { margin-left: 3px; }

.palette { position: relative; width: 313px; align-self: flex-start; margin: 140px 4px 0 0; border: 1px solid #c4c4c4; background: #f1f1f1; }
.palette-head { display: flex; align-items: center; height: 30px; padding: 0 5px 0 1px; border-bottom: 1px solid #c4c4c4; font: 14px/20px Roboto, sans-serif; color: #666; }
.pdot { margin: 0 5px 0 8px; }
.ff { margin-left: auto; }
.options { display: grid; grid-template-rows: repeat(12, 1fr); height: 450px; }
.options h2 { display: flex; align-items: center; gap: 5px; margin: 0; padding-left: 6px; font: bold 14px/20px "Liberation Sans", Arial, sans-serif; }
.opt { display: grid; grid-template-columns: 191px 1fr; align-items: center; padding-left: 15px; }
.ctl { display: flex; gap: 16px; }
.ctl input { appearance: none; position: relative; width: 17px; height: 17px; margin: 0 2px; border: 2px solid #606060; border-radius: 4px; background: linear-gradient(#ececec, #b8b8b8); }
.ctl input:checked { background: linear-gradient(#a8a8a8, #dcdcdc); }
.ctl input:checked::after { content: ""; position: absolute; inset: 0; background: #222; clip-path: polygon(8% 55%, 25% 45%, 40% 72%, 80% 0, 100% 0, 45% 100%, 32% 100%); }
.palette-foot { display: flex; justify-content: flex-end; align-items: center; height: 46px; padding-right: 14px; border-top: 1px solid #b0b0b0; }
.palette-foot button { justify-content: center; width: 103px; height: 25px; border: 1px solid #b4b4b4; background: #e6e6e6; font-size: 15px; color: #777; }

.timeline { display: flex; align-items: center; height: 62px; padding: 2px 15px 0 13px; border-top: 2px solid #c6c6c6; background: #f1f1f1; }
.playback { display: flex; align-items: center; gap: 15px; }
.features { margin-left: 28px; }
.settings { margin-left: auto; }
```
